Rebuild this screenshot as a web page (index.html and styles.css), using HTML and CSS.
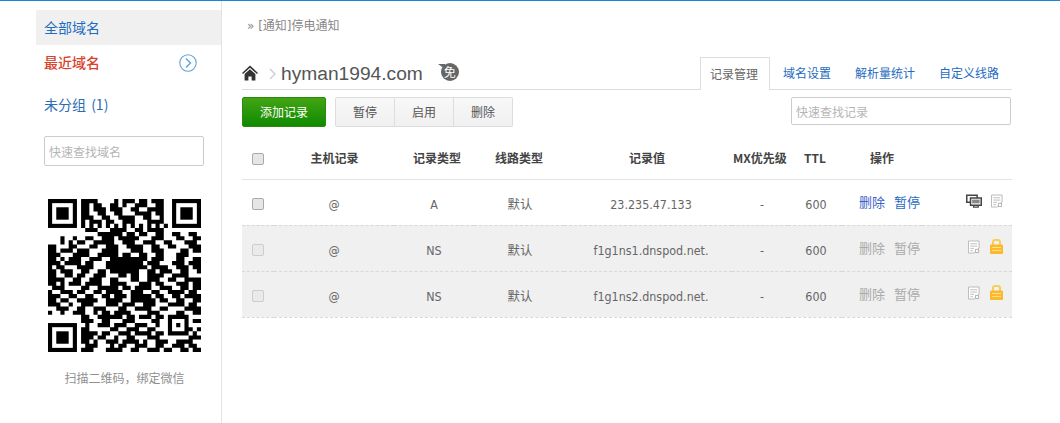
FILE: index.html
```html
<!DOCTYPE html>
<html lang="zh">
<head>
<meta charset="utf-8">
<title>DNSPod</title>
<link rel="stylesheet" href="styles.css">
</head>
<body>
<div class="page">
  <aside class="side">
    <a class="side-item side-all">全部域名</a>
    <div class="side-item side-recent">
      <span>最近域名</span>
      <svg class="side-arrow" width="18" height="18" viewBox="0 0 18 18"><circle cx="9" cy="9" r="8.2" fill="#fff" stroke="#5ea2d2" stroke-width="1.1"/><path d="M7 4.5 11.5 9 7 13.5" fill="none" stroke="#5ea2d2" stroke-width="1.4"/></svg>
    </div>
    <a class="side-item side-group">未分组 (1)</a>
    <input class="side-search" placeholder="快速查找域名">
    <svg class="qr" width="153" height="153" viewBox="0 0 37 37">
      <g fill="none" stroke="#000" transform="translate(0 .5)">
        <path d="M8 0h4M16 0h1M18 0h3M22 0h2M25 0h3
        M8 1h2M11 1h2M15 1h2M18 1h1M21 1h3M26 1h2
        M8 2h2M11 2h3M15 2h3M20 2h2M24 2h4
        M8 3h2M12 3h2M16 3h2M21 3h4M26 3h2
        M8 4h3M13 4h2M17 4h4M23 4h2M27 4h1
        M8 5h1M10 5h3M14 5h2M18 5h3M24 5h4
        M8 6h1M10 6h1M12 6h1M14 6h1M16 6h1M18 6h1M20 6h1M22 6h1M24 6h1M26 6h1M28 6h1
        M9 7h3M15 7h4M21 7h2M24 7h4
        M12 8h6M19 8h2M22 8h2M26 8h2M30 8h2M34 8h2
        M3 9h1M6 9h1M9 9h2M13 9h3M17 9h5M25 9h3M31 9h2M35 9h2
        M3 10h1M5 10h1M7 10h2M11 10h5M18 10h3M23 10h3M28 10h2M33 10h3
        M0 11h2M5 11h2M10 11h2M14 11h3M19 11h4M25 11h2M29 11h2M34 11h3
        M0 12h2M3 12h3M7 12h3M13 12h4M20 12h3M25 12h3M32 12h2M35 12h2
        M0 13h3M6 13h4M12 13h5M18 13h2M22 13h2M26 13h2M31 13h3
        M0 14h2M3 14h1M5 14h3M10 14h3M15 14h9M25 14h3M31 14h2M35 14h2
        M0 15h3M4 15h4M9 15h2M14 15h9M24 15h3M30 15h3M34 15h3
        M0 16h1M2 16h2M7 16h4M14 16h10M25 16h4M31 16h3M35 16h2
        M0 17h2M3 17h3M8 17h2M12 17h2M15 17h7M24 17h2M27 17h3M32 17h2M36 17h1
        M0 18h2M4 18h2M7 18h2M11 18h3M17 18h2M20 18h2M24 18h4M30 18h4
        M0 19h4M6 19h2M10 19h3M15 19h2M20 19h2M24 19h3M29 19h2M33 19h4
        M0 20h2M3 20h1M5 20h3M9 20h4M15 20h4M22 20h3M26 20h2M31 20h3M35 20h2
        M1 21h3M8 21h2M12 21h5M18 21h2M21 21h4M27 21h3M32 21h2M35 21h2
        M0 22h1M3 22h3M7 22h2M11 22h2M14 22h4M20 22h3M25 22h2M29 22h4M34 22h2
        M0 23h3M5 23h2M9 23h2M13 23h2M16 23h3M20 23h5M26 23h2M30 23h2M33 23h4
        M0 24h2M3 24h2M7 24h5M14 24h4M20 24h6M27 24h2M31 24h2M35 24h2
        M0 25h3M5 25h1M8 25h3M14 25h3M18 25h3M23 25h3M29 25h4M34 25h2
        M2 26h3M7 26h2M11 26h3M17 26h2M21 26h4M27 26h2M33 26h4
        M0 27h1M3 27h1M6 27h3M11 27h1M13 27h2M16 27h4M24 27h3M31 27h2M35 27h2
        M8 28h2M12 28h2M14 28h4M19 28h2M22 28h3M26 28h2M29 28h5
        M8 29h3M13 29h2M18 29h3M25 29h2M29 29h1M33 29h1M35 29h2
        M9 30h1M12 30h3M16 30h3M21 30h3M26 30h1M29 30h1M31 30h1M33 30h1
        M8 31h2M15 31h2M19 31h3M24 31h2M29 31h1M33 31h2M36 31h1
        M8 32h4M13 32h2M17 32h3M21 32h4M26 32h2M29 32h5M35 32h1
        M8 33h3M12 33h2M16 33h1M19 33h2M24 33h3M34 33h3
        M8 34h2M11 34h1M14 34h3M18 34h4M23 34h1M26 34h3M31 34h4
        M9 35h3M15 35h1M17 35h2M21 35h3M26 35h2M30 35h3M34 35h2
        M8 36h3M14 36h4M20 36h2M24 36h3M28 36h2M32 36h2M35 36h2"/>
      </g>
      <g fill="none" stroke="#000">
        <rect x=".5" y=".5" width="6" height="6"/>
        <rect x="30.5" y=".5" width="6" height="6"/>
        <rect x=".5" y="30.5" width="6" height="6"/>
      </g>
      <rect x="2" y="2" width="3" height="3"/>
      <rect x="32" y="2" width="3" height="3"/>
      <rect x="2" y="32" width="3" height="3"/>
    </svg>
    <p class="qr-caption">扫描二维码，绑定微信</p>
  </aside>

  <main class="main">
    <p class="notice">» [通知]停电通知</p>

    <div class="title-bar">
      <svg class="home" width="16" height="16" viewBox="0 0 16 15"><path d="M8 0 0 7.4 1 8.6 8 2.2l7 6.4 1-1.2z" fill="#333"/><path d="M2.6 8.6 8 3.8l5.4 4.800V15H9.600v-4H6.400v4H2.600z" fill="#333"/></svg>
      <svg class="crumb" width="7" height="12" viewBox="0 0 7 12"><path d="M1 1l5 5-5 5" fill="none" stroke="#ccc" stroke-width="1.3"/></svg>
      <span class="domain">hyman1994.com</span>
      <span class="badge">免</span>
      <nav class="tabs">
        <a class="tab tab-active">记录管理</a>
        <a class="tab">域名设置</a>
        <a class="tab">解析量统计</a>
        <a class="tab">自定义线路</a>
      </nav>
    </div>

    <div class="toolbar">
      <button class="btn-add">添加记录</button>
      <div class="btn-group">
        <button class="btn">暂停</button>
        <button class="btn">启用</button>
        <button class="btn">删除</button>
      </div>
      <input class="record-search" placeholder="快速查找记录">
    </div>

    <table class="records">
      <colgroup>
        <col class="c-check"><col class="c-host"><col class="c-type"><col class="c-line"><col class="c-value"><col class="c-mx"><col class="c-ttl"><col class="c-op"><col class="c-icons">
      </colgroup>
      <thead>
        <tr>
          <th><span class="check"></span></th>
          <th class="th-host">主机记录</th><th class="th-type">记录类型</th><th>线路类型</th><th class="th-value">记录值</th><th>MX优先级</th><th>TTL</th><th>操作</th><th></th>
        </tr>
      </thead>
      <tbody>
        <tr>
          <td><span class="check"></span></td>
          <td>@</td><td>A</td><td class="line">默认</td><td class="val">23.235.47.133</td><td class="dash">-</td><td class="ttl">600</td>
          <td class="ops"><a class="op-del">删除</a><a class="op-pause">暂停</a></td>
          <td class="icons">
            <svg class="screens" width="16" height="14" viewBox="0 0 17 14"><path d="M.8.8h11v7.600H.8z" fill="#fff" stroke="#444" stroke-width="1.6"/><path d="M4.800 3.800h11.400v7.600H4.800z" fill="#fff" stroke="#444" stroke-width="1.6"/><path d="M6.500 5.500h8v4h-8z" fill="#888"/><path d="M8 11.500v2h5v-2" fill="none" stroke="#444" stroke-width="1.2"/></svg>
            <svg class="doc" width="12" height="14" viewBox="0 0 13 14"><path d="M.5.5h11.500v7.500l-5 5.500H.5z" fill="#fff" stroke="#b5b5b5"/><path d="M2.500 3.500h7.500M2.500 6h7.500M2.500 8.500h4M2.500 11h3" stroke="#bbb"/><path d="M8 9.500h3.500v3.500H8z" fill="#fff" stroke="#aaa"/></svg>
          </td>
        </tr>
        <tr class="locked">
          <td><span class="check"></span></td>
          <td>@</td><td>NS</td><td class="line">默认</td><td class="val">f1g1ns1.dnspod.net.</td><td class="dash">-</td><td class="ttl">600</td>
          <td class="ops"><a>删除</a><a>暂停</a></td>
          <td class="icons">
            <svg class="doc" width="12" height="14" viewBox="0 0 13 14"><path d="M.5.5h11.500v7.500l-5 5.500H.5z" fill="#fff" stroke="#b5b5b5"/><path d="M2.500 3.500h7.500M2.500 6h7.500M2.500 8.500h4M2.500 11h3" stroke="#bbb"/><path d="M8 9.500h3.500v3.500H8z" fill="#fff" stroke="#aaa"/></svg>
            <svg class="lock" width="13" height="15" viewBox="0 0 13 15"><path d="M3 6V3a2 2 0 0 1 2-2h3a2 2 0 0 1 2 2v3" fill="none" stroke="#f6cf58" stroke-width="2"/><rect y="5.500" width="13" height="9.500" rx="1" fill="#fdb92e"/><path d="M2 8.500h9M2 11.500h9" stroke="#fde08c"/></svg>
          </td>
        </tr>
        <tr class="locked">
          <td><span class="check"></span></td>
          <td>@</td><td>NS</td><td class="line">默认</td><td class="val">f1g1ns2.dnspod.net.</td><td class="dash">-</td><td class="ttl">600</td>
          <td class="ops"><a>删除</a><a>暂停</a></td>
          <td class="icons">
            <svg class="doc" width="12" height="14" viewBox="0 0 13 14"><path d="M.5.5h11.500v7.500l-5 5.500H.5z" fill="#fff" stroke="#b5b5b5"/><path d="M2.500 3.500h7.500M2.500 6h7.500M2.500 8.500h4M2.500 11h3" stroke="#bbb"/><path d="M8 9.500h3.500v3.500H8z" fill="#fff" stroke="#aaa"/></svg>
            <svg class="lock" width="13" height="15" viewBox="0 0 13 15"><path d="M3 6V3a2 2 0 0 1 2-2h3a2 2 0 0 1 2 2v3" fill="none" stroke="#f6cf58" stroke-width="2"/><rect y="5.500" width="13" height="9.500" rx="1" fill="#fdb92e"/><path d="M2 8.500h9M2 11.500h9" stroke="#fde08c"/></svg>
          </td>
        </tr>
      </tbody>
    </table>
  </main>
</div>
</body>
</html>
```
FILE: styles.css
```css
* { box-sizing: border-box; }
html, body { margin: 0; height: 100%; }
body {
  background: #fff;
  color: #555;
  font: 12px/18px "DejaVu Sans", "Noto Sans CJK SC", sans-serif;
  overflow: hidden;
}
a { color: #1f6cc0; text-decoration: none; }
input { font-family: "Noto Sans CJK SC", sans-serif; outline: none; }
input::placeholder { color: #b5b5b5; opacity: 1; }
button { font-family: "Noto Sans CJK SC", sans-serif; cursor: pointer; }

.page {
  display: flex;
  height: 423px;
  padding-left: 36px;
  border-top: 1px solid #1a85d0;
}

/* sidebar */
.side {
  display: flex;
  flex-direction: column;
  width: 186px;
  padding-top: 9px;
  border-right: 1px solid #e3e3e3;
}
.side-item {
  display: flex;
  align-items: center;
  justify-content: space-between;
  padding: 0 24px 2px 8px;
  font-family: "Noto Sans CJK SC", sans-serif;
  font-size: 14px;
  word-spacing: 2px;
}
.side-all { height: 35px; background: #f0f0f0; }
.side-recent { height: 35px; color: #d9412b; font-weight: 500; }
.side-group { height: 49px; color: #2a6db5; }
.side-arrow { margin-top: 2px; }
.side-search {
  width: 160px;
  height: 30px;
  margin: 7px 0 0 8px;
  padding: 0 4px;
  border: 1px solid #ccc;
  border-radius: 2px;
  font-size: 12px;
}
.qr { display: block; margin: 33px 0 0 12px; }
.qr-caption {
  margin: 17px 0 0;
  padding-right: 8px;
  color: #8f8f8f;
  font-family: "Noto Sans CJK SC", sans-serif;
  text-align: center;
}

/* main */
.main { width: 770px; margin-left: 20px; }
.notice {
  margin: 16px 0 0 5px;
  color: #888;
}
.title-bar {
  display: flex;
  align-items: center;
  height: 32px;
  margin-top: 23px;
  border-bottom: 1px solid #ddd;
}
.home { flex: none; margin-right: 11px; margin-top: -1px; }
.crumb { flex: none; margin-right: 5px; }
.domain {
  color: #555;
  font-family: "Liberation Sans", sans-serif;
  font-size: 19.2px;
  line-height: 28px;
}
.badge {
  position: relative;
  width: 18px;
  height: 18px;
  margin: -4px 0 0 18px;
  border-radius: 50%;
  background: #666;
  color: #fff;
  font-family: "Noto Sans CJK SC", sans-serif;
  font-size: 12px;
  line-height: 18px;
  text-align: center;
}
.badge::before {
  content: "";
  position: absolute;
  top: 1px;
  left: -3px;
  border-top: 5px solid #666;
  border-left: 7px solid transparent;
}
.tabs { display: flex; align-self: flex-end; height: 32px; margin-left: auto; margin-right: 1px; }
.tab {
  display: block;
  height: 32px;
  padding: 6px 12px 0;
  font-family: "Noto Sans CJK SC", sans-serif;
  line-height: 20px;
}
.tab-active {
  height: 33px;
  margin-right: 1px;
  padding: 6px 11px 0 9px;
  border: 1px solid #ddd;
  border-bottom: 0;
  background: #fff;
  color: #666;
}

.toolbar { display: flex; align-items: flex-start; margin-top: 7px; }
.btn-add {
  width: 84px;
  height: 30px;
  padding: 0 0 2px;
  border: 1px solid #2d8a0d;
  border-radius: 2px;
  background: linear-gradient(#42a414, #108a00);
  color: #fff;
  font-size: 12px;
}
.btn-group { display: flex; margin-left: 9px; }
.btn {
  width: 59px;
  height: 30px;
  padding: 0 0 2px;
  border: 1px solid #ddd;
  border-left-width: 0;
  background: linear-gradient(#f8f8f8, #f0f0f0);
  color: #555;
  font-size: 12px;
}
.btn:first-child { width: 60px; border-left-width: 1px; border-radius: 2px 0 0 2px; }
.btn:last-child { border-radius: 0 2px 2px 0; }
.record-search {
  width: 220px;
  height: 28px;
  margin-left: auto;
  margin-right: 1px;
  padding: 0 4px;
  border: 1px solid #ccc;
  border-radius: 2px;
  font-size: 12px;
}

/* table */
.records {
  width: 770px;
  margin-top: 11px;
  border-collapse: collapse;
  table-layout: fixed;
}
.c-check { width: 32px; }
.c-host { width: 120px; }
.c-type { width: 80px; }
.c-line { width: 90px; }
.c-value { width: 168px; }
.c-mx { width: 56px; }
.c-ttl { width: 54px; }
.c-op { width: 80px; }
.c-icons { width: 90px; }
.records th {
  height: 41px;
  padding: 0;
  border-bottom: 1px solid #e3e3e3;
  color: #444;
  font-family: "Noto Sans CJK SC", sans-serif;
  font-weight: 700;
  text-align: center;
  white-space: nowrap;
}
.records .th-host { padding-left: 1px; }
.records .th-type { padding-left: 6px; }
.records .th-value { padding-right: 2px; }
.records td {
  height: 46px;
  padding: 5px 0 0;
  border-bottom: 1px dashed #d8d8d8;
  color: #666;
  font-family: "DejaVu Sans Condensed", "DejaVu Sans", "Noto Sans CJK SC", sans-serif;
  font-size: 12.4px;
  text-align: center;
  white-space: nowrap;
}
.records .line { padding-left: 2px; }
.records .val { padding-left: 6px; }
.records .dash { padding-left: 4px; }
.records .ttl { padding-left: 2px; }
.check {
  display: inline-block;
  width: 12px;
  height: 12px;
  margin-top: -2px;
  border: 1px solid #aaa;
  border-radius: 2px;
  background: #e6e6e6;
  vertical-align: middle;
}
.locked { background: #f0f0f0; }
.locked .check { border-color: #ccc; background: #eaeaea; }
.records .ops { padding: 0 0 0 17px; font-family: "Noto Sans CJK SC", sans-serif; font-size: 13px; text-align: left; }
.ops a { margin-right: 9px; color: #aaa; }
.ops .op-del { color: #3b63c9; }
.ops .op-pause { color: #1f6cc0; }
.records .icons { padding: 0 9px 3px 0; font-size: 0; text-align: right; line-height: 0; }
.icons svg { margin-left: 9px; vertical-align: middle; }
.icons .lock { margin-left: 10px; }
```
